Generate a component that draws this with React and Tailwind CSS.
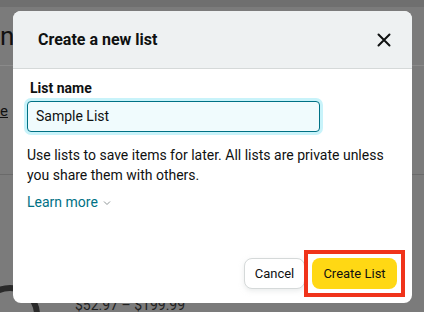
import React from "react";

export default function App() {
  return (
    <div
      className="relative w-[424px] h-[312px] overflow-hidden bg-[#7b7b7b]"
      style={{ fontFamily: 'Roboto, Arial, sans-serif' }}
    >
      {/* dimmed page underneath */}
      <div className="h-[7px] bg-[#6f6f6f]" />
      <div className="flex flex-col">
        <div className="h-[58px] flex items-center">
          <span className="text-[26px] leading-none text-[#111]">n</span>
        </div>
        <div className="h-px bg-[#8a8a8a]" />
        <div className="h-[60px] flex items-end pb-[4px]">
          <span className="text-[15px] text-[#111] underline">e</span>
        </div>
        <div className="h-px bg-[#6a6a6a] mt-[48px]" />
        <div className="h-[120px]" />
        <div className="flex items-start pl-[75px]">
          <span className="text-[14px] text-[#222]">$52.97 – $199.99</span>
        </div>
      </div>
      <div className="absolute left-[-20px] top-[285px] w-[60px] h-[60px] rounded-full border-[6px] border-[#2a2a2a]" />

      {/* modal */}
      <div className="absolute left-[13px] top-[11px] w-[399px] h-[292px] bg-white rounded-[8px] overflow-hidden flex flex-col">
        <div className="h-[58px] bg-[#eef1f2] border-b border-[#d5d9d9] flex items-center justify-between pl-[25px] pr-[21px] shrink-0">
          <span className="text-[16px] font-bold text-[#0f1111]">Create a new list</span>
          <svg width="14" height="14" viewBox="0 0 14 14">
            <path d="M1.5 1.5 L12.5 12.5 M12.5 1.5 L1.5 12.5" stroke="#0f1111" strokeWidth="2" strokeLinecap="round" />
          </svg>
        </div>
        <div className="flex flex-col flex-1 pl-[14px] pr-[15px] pt-[10px]">
          <label className="text-[14px] font-bold text-[#0f1111] leading-[18px] pl-[3px]">List name</label>
          <div className="mt-[4px] w-[293px] h-[31px] rounded-[4px] border border-[#007185] bg-[#f0fbfd] shadow-[0_0_0_3px_#c8f3fa] flex items-center pl-[8px]">
            <span className="text-[14px] text-[#0f1111]">Sample List</span>
          </div>
          <p className="mt-[13px] text-[14px] leading-[20px] text-[#0f1111]">
            Use lists to save items for later. All lists are private unless you share them with others.
          </p>
          <div className="mt-[7px] flex items-center gap-[5px] text-[14px] text-[#007185]">
            <span>Learn more</span>
            <svg width="8" height="6" viewBox="0 0 8 6">
              <path d="M1 1.5 L4 4.5 L7 1.5" stroke="#8d9596" strokeWidth="1" fill="none" />
            </svg>
          </div>
          <div className="flex-1" />
          <div className="flex justify-end items-center gap-[7px] pb-[14px]">
            <button className="h-[31px] w-[61px] rounded-[8px] border border-[#d5d9d9] bg-white text-[13px] text-[#0f1111] shadow-[0_2px_5px_rgba(213,217,217,0.5)]">
              Cancel
            </button>
            <div className="border-[4px] border-[#f0331a] p-[4px] -m-[8px] relative">
              <button className="h-[31px] w-[85px] rounded-[8px] bg-[#ffd814] text-[13px] text-[#0f1111]">
                Create List
              </button>
            </div>
          </div>
        </div>
      </div>
    </div>
  );
}
